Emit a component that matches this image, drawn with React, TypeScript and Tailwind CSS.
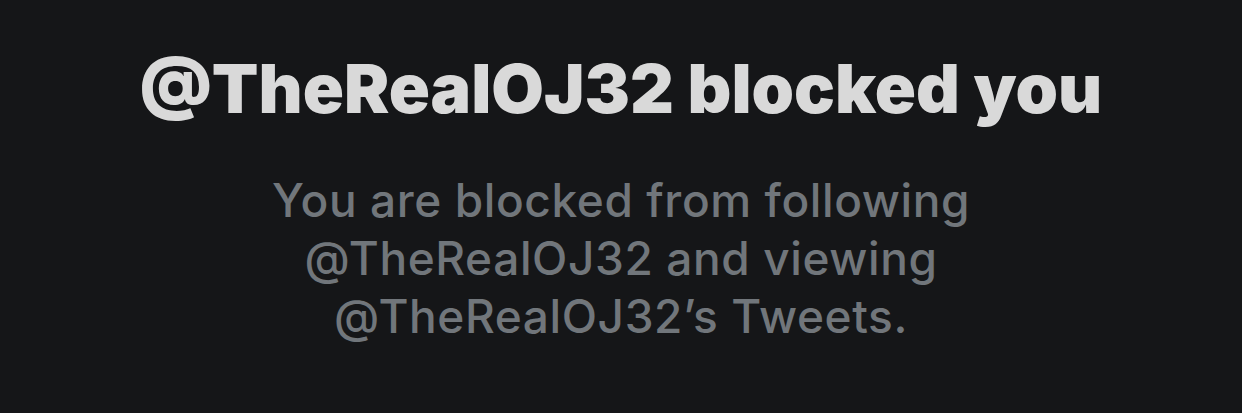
import React from "react";

const handle = "@TheRealOJ32";

const App = () => {
  return (
    <main className="w-[1242px] h-[413px] bg-[#151618] flex flex-col items-center pt-[50px] font-['Inter',sans-serif] text-center">
      {/* Title */}
      <h1 className="text-[68px] leading-[76px] font-black text-[#d9d9d9]">
        {handle} blocked you
      </h1>

      {/* Explanation */}
      <p className="mt-[45px] text-[46px] leading-[58px] font-medium text-[#71767b] tracking-[0.6px]">
        You are blocked from following
        <br />
        {handle} and viewing
        <br />
        {handle}’s Tweets.
      </p>
    </main>
  );
};

export default App;
